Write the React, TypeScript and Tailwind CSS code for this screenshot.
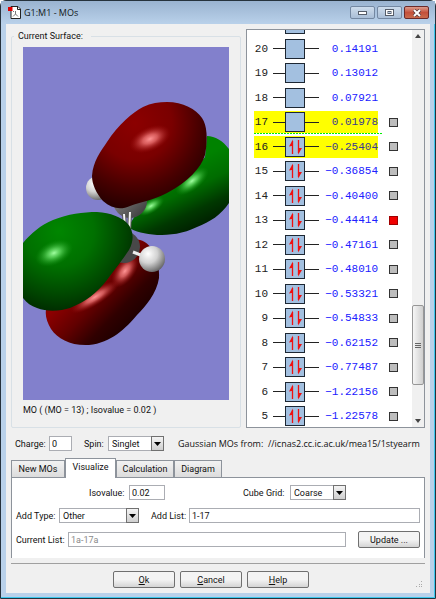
import { useState } from 'react';
import type { ReactNode } from 'react';
import clsx from 'clsx';

type Orbital = { id: number; energy: string; occupied?: boolean; selectable?: boolean; highlighted?: boolean };

const orbitals: Orbital[] = [
  { id: 20, energy: '0.14191' },
  { id: 19, energy: '0.13012' },
  { id: 18, energy: '0.07921' },
  { id: 17, energy: '0.01978', selectable: true, highlighted: true },
  { id: 16, energy: '−0.25404', occupied: true, selectable: true, highlighted: true },
  { id: 15, energy: '−0.36854', occupied: true, selectable: true },
  { id: 14, energy: '−0.40400', occupied: true, selectable: true },
  { id: 13, energy: '−0.44414', occupied: true, selectable: true },
  { id: 12, energy: '−0.47161', occupied: true, selectable: true },
  { id: 11, energy: '−0.48010', occupied: true, selectable: true },
  { id: 10, energy: '−0.53321', occupied: true, selectable: true },
  { id: 9, energy: '−0.54833', occupied: true, selectable: true },
  { id: 8, energy: '−0.62152', occupied: true, selectable: true },
  { id: 7, energy: '−0.77487', occupied: true, selectable: true },
  { id: 6, energy: '−1.22156', occupied: true, selectable: true },
  { id: 5, energy: '−1.22578', occupied: true, selectable: true },
];

const tabs = [
  { label: 'New MOs', width: 'w-[54px]' },
  { label: 'Visualize', width: 'w-[51px]' },
  { label: 'Calculation', width: 'w-[58px]' },
  { label: 'Diagram', width: 'w-12' },
];

function TitleBar() {
  return (
    <header className="flex h-[23px] items-center bg-linear-to-b from-[#9ab3d0] to-[#b9d1ea] pl-[7px] pr-[6px]">
      <svg viewBox="0 0 13 13" className="mr-[3px] h-[13px] w-[13px]">
        <path d="M3 .5h7l2.500 2.500v9.500H3z" fill="#fff" stroke="#222" />
        <path d="M9.500.5v3h3" fill="none" stroke="#222" />
        <path d="M7.500 5v3M7.500 8l-2.500 2.500M7.500 8l2.500 2.500M5 5l1 1" fill="none" stroke="#777" />
        <path d="M0 1h4.500v4H0z" fill="#e00000" />
      </svg>
      <h1 className="flex-1 font-['Open_Sans',sans-serif] text-[9px] text-[#101820]">G1:M1 - MOs</h1>
      <div className="flex gap-[2px]">
        <button aria-label="Minimize" className="flex h-[13px] w-[25px] items-center justify-center rounded-xs border border-[#7488a2] bg-linear-to-b from-[#cddcec] via-[#bccde1] to-[#a9bed7]">
          <svg viewBox="0 0 9 4" className="h-1 w-[9px]">
            <rect x=".5" y=".5" width="8" height="3" fill="#fff" stroke="#565d69" />
          </svg>
        </button>
        <button aria-label="Maximize" className="flex h-[13px] w-[25px] items-center justify-center rounded-xs border border-[#7488a2] bg-linear-to-b from-[#cddcec] via-[#bccde1] to-[#a9bed7]">
          <svg viewBox="0 0 9 7" className="h-[7px] w-[9px]">
            <rect x=".5" y=".5" width="8" height="6" fill="#fff" stroke="#565d69" />
            <rect x="3" y="2.500" width="3" height="2" fill="#b6c7dc" stroke="#565d69" />
          </svg>
        </button>
        <button aria-label="Close" className="flex h-[13px] w-[25px] items-center justify-center rounded-xs border border-[#6b2a2a] bg-linear-to-b from-[#dc9b8c] via-[#c4503b] to-[#c96a4c]">
          <svg viewBox="0 0 10 8" className="h-2 w-[10px]">
            <path d="M2 1l6 6M8 1l-6 6" stroke="#5d3a3c" strokeWidth="3.600" />
            <path d="M2 1l6 6M8 1l-6 6" stroke="#fff" strokeWidth="2" />
          </svg>
        </button>
      </div>
    </header>
  );
}

function SurfaceView() {
  return (
    <svg viewBox="0 0 206 353" preserveAspectRatio="xMidYMid slice" className="h-[353px] w-full bg-[#8280cc]">
      <defs>
        <radialGradient id="redFront" gradientUnits="userSpaceOnUse" cx="112" cy="76" r="92">
          <stop offset="0" stopColor="#8c0000" />
          <stop offset=".4" stopColor="#7a0000" />
          <stop offset=".7" stopColor="#480000" />
          <stop offset="1" stopColor="#1c0000" />
        </radialGradient>
        <linearGradient id="redBack" gradientUnits="userSpaceOnUse" x1="55" y1="238" x2="100" y2="282">
          <stop offset="0" stopColor="#8c0000" />
          <stop offset=".4" stopColor="#620000" />
          <stop offset=".75" stopColor="#300000" />
          <stop offset="1" stopColor="#200000" />
        </linearGradient>
        <radialGradient id="greenFront" gradientUnits="userSpaceOnUse" cx="36" cy="184" r="88">
          <stop offset="0" stopColor="#008600" />
          <stop offset=".4" stopColor="#007000" />
          <stop offset=".75" stopColor="#004400" />
          <stop offset="1" stopColor="#002200" />
        </radialGradient>
        <linearGradient id="greenBack" gradientUnits="userSpaceOnUse" x1="160" y1="118" x2="186" y2="174">
          <stop offset="0" stopColor="#008200" />
          <stop offset=".4" stopColor="#006c00" />
          <stop offset=".75" stopColor="#003800" />
          <stop offset="1" stopColor="#002200" />
        </linearGradient>
        <radialGradient id="atom" cx=".35" cy=".3" r=".8">
          <stop offset="0" stopColor="#fff" />
          <stop offset=".45" stopColor="#d2d2d2" />
          <stop offset="1" stopColor="#555" />
        </radialGradient>
        <linearGradient id="carbon" x1="0" y1="0" x2="1" y2="1">
          <stop offset="0" stopColor="#999" />
          <stop offset="1" stopColor="#333" />
        </linearGradient>
        <radialGradient id="redShine">
          <stop offset="0" stopColor="#ff9494" />
          <stop offset=".35" stopColor="#ec7070" stopOpacity=".8" />
          <stop offset="1" stopColor="#a01010" stopOpacity="0" />
        </radialGradient>
        <radialGradient id="greenShine">
          <stop offset="0" stopColor="#a0ffa0" />
          <stop offset=".35" stopColor="#60d860" stopOpacity=".8" />
          <stop offset="1" stopColor="#109010" stopOpacity="0" />
        </radialGradient>
      </defs>
      <circle cx="75" cy="141" r="12" fill="url(#atom)" />
      <path d="M184 89C192 89 200 94 206 102V156C198 168 187 175 174 180C160 187 147 188 134 188C122 187 112 185 105 180L122 153L164 132L182 110Z" fill="url(#greenBack)" />
      <ellipse cx="169" cy="134" rx="20" ry="9" transform="rotate(-38 169 134)" fill="url(#greenShine)" />
      <ellipse cx="128" cy="159" rx="15" ry="7" transform="rotate(-32 128 159)" fill="url(#greenShine)" />
      <circle cx="107" cy="154" r="17" fill="url(#carbon)" />
      <path d="M144 55C160 55 173 62 179 71C184 78 185 92 182 108C178 121 165 135 144 146C130 153 118 155 107 159C98 163 89 162 80 154C73 146 69 137 69 129C70 114 78 104 84 95C95 78 110 65 120 60C128 56 136 55 144 55Z" fill="url(#redFront)" />
      <ellipse cx="127" cy="92" rx="22" ry="12" transform="rotate(-24 127 92)" fill="url(#redShine)" />
      <path d="M117 193C128 196 137 210 136 231C134 246 122 260 114 268C103 281 88 296 66 298C48 299 35 292 28 282C24 275 22 269 23 263L60 225L105 190Z" fill="url(#redBack)" />
      <ellipse cx="102" cy="224" rx="19" ry="10" transform="rotate(-54 102 224)" fill="url(#redShine)" />
      <ellipse cx="72" cy="250" rx="28" ry="8" transform="rotate(-32 72 250)" fill="url(#redShine)" />
      <circle cx="101" cy="200" r="16" fill="#484848" />
      <path d="M101 167l1 14M107 165l-1 22" stroke="#555" strokeWidth="4" />
      <path d="M101 167l1 14M107 165l-1 22" stroke="#f4f4f4" strokeWidth="2" />
      <path d="M0 196C8 186 18 178 30 173C45 167 60 165 74 165C88 166 98 170 104 176C110 182 112 192 106 203C98 215 92 222 84 233C74 246 62 255 47 261C38 264 24 265 14 261C8 259 4 256 0 251Z" fill="url(#greenFront)" />
      <ellipse cx="31" cy="206" rx="20" ry="12" transform="rotate(-24 31 206)" fill="url(#greenShine)" />
      <path d="M110 205l10 4" stroke="#eee" strokeWidth="3" />
      <circle cx="129" cy="212" r="13" fill="url(#atom)" />
    </svg>
  );
}

function Spins() {
  return (
    <svg viewBox="0 0 18 18" className="h-full w-full">
      <path d="M6.500 16V3M12.500 2v13" stroke="#f01010" strokeWidth="1.300" />
      <path d="M7 1.500V8H5.500L3 8.500z" fill="#f01010" />
      <path d="M12 16.500V10h1.500L16 10z" fill="#f01010" />
    </svg>
  );
}

function OrbitalRow({ orbital, checked, onToggle }: { orbital: Orbital; checked: boolean; onToggle: () => void }) {
  return (
    <li className="flex items-center odd:h-[25px] even:h-6">
      <div className={clsx('flex h-[22px] w-[124px] items-center', orbital.highlighted && 'bg-[#ffff00]')}>
        <span className="w-[14px] text-right text-[#222]">{orbital.id}</span>
        <span className="ml-[5px] h-px w-3 bg-[#222]" />
        <span className="h-5 w-5 border border-[#1d2733] bg-[#a3c0e0]">{orbital.occupied && <Spins />}</span>
        <span className="h-px w-[14px] bg-[#222]" />
        <span className={clsx('flex-1 text-right', orbital.highlighted ? 'text-[#3a3a90]' : 'text-[#2020ff]')}>{orbital.energy}</span>
      </div>
      {orbital.selectable && (
        <input
          type="checkbox"
          aria-label={`Select MO ${orbital.id}`}
          checked={checked}
          onChange={onToggle}
          className="ml-[11px] h-[9px] w-[9px] appearance-none border border-[#333] bg-[#bdbdbd] checked:border-[#a00000] checked:bg-[#f00000]"
        />
      )}
    </li>
  );
}

function OrbitalList() {
  const [selected, setSelected] = useState([13]);
  const toggle = (id: number) =>
    setSelected((ids) => (ids.includes(id) ? ids.filter((i) => i !== id) : [...ids, id]));

  return (
    <div className="flex h-[399px] min-w-0 flex-1 overflow-hidden border border-[#8d939b] bg-white">
      <div className="relative flex-1 overflow-hidden pl-[7px] font-['Liberation_Mono',monospace] text-[11px] leading-3">
        {/* bottom edge of the next level up, scrolled out of view */}
        <div className="ml-[31px] h-1 w-5 border border-t-0 border-[#1d2733] bg-[#a3c0e0]" />
        <ul className="mt-[2px]">
          {orbitals.map((orbital) => (
            <OrbitalRow
              key={orbital.id}
              orbital={orbital}
              checked={selected.includes(orbital.id)}
              onToggle={() => toggle(orbital.id)}
            />
          ))}
        </ul>
        {/* HOMO / LUMO divider */}
        <svg className="absolute top-[103px] left-[7px] h-px w-32">
          <line x1="0" y1=".5" x2="128" y2=".5" stroke="#00f000" strokeDasharray="2 1" />
        </svg>
      </div>
      <div className="flex w-3 flex-col items-center bg-[#f0f0f0] py-1">
        <svg viewBox="0 0 6 4" className="h-1 w-[6px]"><path d="M0 4l3-4 3 4z" fill="#444" /></svg>
        <div className="mt-[267px] flex h-20 w-3 flex-col items-center justify-center gap-px rounded-xs border border-[#979797] bg-linear-to-r from-[#f6f6f6] to-[#cfcfcf]">
          <span className="h-px w-[6px] bg-[#666]" />
          <span className="h-px w-[6px] bg-[#666]" />
          <span className="h-px w-[6px] bg-[#666]" />
        </div>
        <svg viewBox="0 0 6 4" className="mt-auto h-1 w-[6px]"><path d="M0 0l3 4 3-4z" fill="#444" /></svg>
      </div>
    </div>
  );
}

type FieldProps = { id: string; label: string; labelWidth: string; value: string; width: string; disabled?: boolean };

function Field({ id, label, labelWidth, value, width, disabled }: FieldProps) {
  return (
    <div className={clsx('flex items-center gap-[5px]', width === 'flex-1' && 'min-w-0 flex-1')}>
      <label htmlFor={id} className={clsx('shrink-0 whitespace-nowrap', labelWidth)}>{label}</label>
      <input
        id={id}
        defaultValue={value}
        disabled={disabled}
        className={clsx('h-[15px] min-w-0 border border-[#abadb3] bg-white px-[2px] disabled:text-[#8a8a8a]', width)}
      />
    </div>
  );
}

type DropdownProps = { id: string; label: string; labelWidth: string; options: string[]; width: string };

function Dropdown({ id, label, labelWidth, options, width }: DropdownProps) {
  return (
    <div className="flex items-center gap-[5px]">
      <label htmlFor={id} className={clsx('shrink-0 whitespace-nowrap', labelWidth)}>{label}</label>
      <div className={clsx('relative h-[15px]', width)}>
        <select id={id} className="block h-full w-full appearance-none border border-[#abadb3] bg-white pl-[3px] leading-3">
          {options.map((option) => (
            <option key={option}>{option}</option>
          ))}
        </select>
        <span className="pointer-events-none absolute inset-y-0 right-0 flex w-[13px] items-center justify-center border border-[#707070] bg-linear-to-b from-[#f4f4f4] to-[#cfcfcf]">
          <svg viewBox="0 0 7 4" className="h-1 w-[7px]"><path d="M0 0h7L3.500 4z" fill="#000" /></svg>
        </span>
      </div>
    </div>
  );
}

function PushButton({ children }: { children: ReactNode }) {
  return (
    <button className="flex h-[17px] w-[62px] items-center justify-center rounded-xs border border-[#707070] bg-linear-to-b from-[#f4f4f4] from-50% to-[#d4d4d4] leading-3">
      <span>{children}</span>
    </button>
  );
}

export default function App() {
  const [activeTab, setActiveTab] = useState('Visualize');

  return (
    <div className="flex min-h-screen flex-col rounded-t-md border border-[#26323c] bg-[#b9d1ea] font-[Roboto,sans-serif] text-[9px] leading-3 text-[#101010]">
      <TitleBar />
      <div className="flex flex-1 border-r border-b border-[#3cc8ee] pr-1 pb-1 pl-[5px]">
        <main className="flex min-w-0 flex-1 flex-col bg-[#f0f0f0] px-[5px] pt-[5px]">
          <div className="flex items-end gap-[5px]">
            <fieldset className="h-[398px] w-[230px] rounded-xs border border-[#d8e0e6] px-[11px]">
              <legend className="-ml-[9px] pr-2 pl-1">Current Surface:</legend>
              <div className="pt-[5px]">
                <SurfaceView />
                <p className="mt-1">MO ( (MO = 13) ; Isovalue = 0.02 )</p>
              </div>
            </fieldset>
            <OrbitalList />
          </div>

          <div className="mt-2 flex h-[15px] items-center pl-1">
            <Field id="charge" label="Charge:" labelWidth="w-[29px]" value="0" width="w-[23px]" />
            <div className="ml-3">
              <Dropdown id="spin" label="Spin:" labelWidth="w-[19px]" options={['Singlet', 'Triplet']} width="w-14" />
            </div>
            <p className="ml-[14px] font-['Open_Sans',sans-serif] whitespace-pre">
              Gaussian MOs from:  //icnas2.cc.ic.ac.uk/mea15/1styearm
            </p>
          </div>

          <div role="tablist" className="mt-[7px] flex items-end">
            {tabs.map((tab) => {
              const isActive = activeTab === tab.label;
              return (
                <button
                  key={tab.label}
                  role="tab"
                  aria-selected={isActive}
                  onClick={() => setActiveTab(tab.label)}
                  className={clsx(
                    'border border-b-0 border-[#8d939b] text-center',
                    tab.width,
                    isActive ? 'relative -mb-px h-5 bg-white pb-[3px]' : 'h-[17px] bg-linear-to-b from-[#f2f2f2] to-[#dcdcdc]'
                  )}
                >
                  {tab.label}
                </button>
              );
            })}
          </div>

          <section className="flex flex-col gap-2 border border-b-0 border-[#8d939b] bg-white px-1 pt-[7px] pb-[10px]">
            <div className="flex justify-between pr-[74px] pl-[73px]">
              <Field id="isovalue" label="Isovalue:" labelWidth="w-[35px]" value="0.02" width="w-9" />
              <Dropdown id="grid" label="Cube Grid:" labelWidth="w-[42px]" options={['Coarse', 'Medium', 'Fine']} width="w-14" />
            </div>
            <div className="flex gap-3">
              <Dropdown id="type" label="Add Type:" labelWidth="w-[38px]" options={['Other', 'HOMO', 'LUMO']} width="w-20" />
              <Field id="list" label="Add List:" labelWidth="w-[33px]" value="1-17" width="flex-1" />
            </div>
            <div className="flex items-center gap-3">
              <Field id="current" label="Current List:" labelWidth="w-[47px]" value="1a-17a" width="flex-1" disabled />
              <PushButton>Update ...</PushButton>
            </div>
          </section>

          <footer className="relative mt-[5px] flex justify-center gap-[5px] border-t border-[#a0a0a0] pt-[7px] pr-[14px]">
            <PushButton><u>O</u>k</PushButton>
            <PushButton><u>C</u>ancel</PushButton>
            <PushButton><u>H</u>elp</PushButton>
            <svg viewBox="0 0 7 7" className="absolute right-[2px] bottom-0 h-[7px] w-[7px]">
              <path d="M5 0h1v1H5zM3 3h1v1H3zM5 3h1v1H5zM0 5h1v1H0zM3 5h1v1H3zM5 5h1v1H5z" fill="#aaa" />
            </svg>
          </footer>
        </main>
      </div>
    </div>
  );
}
